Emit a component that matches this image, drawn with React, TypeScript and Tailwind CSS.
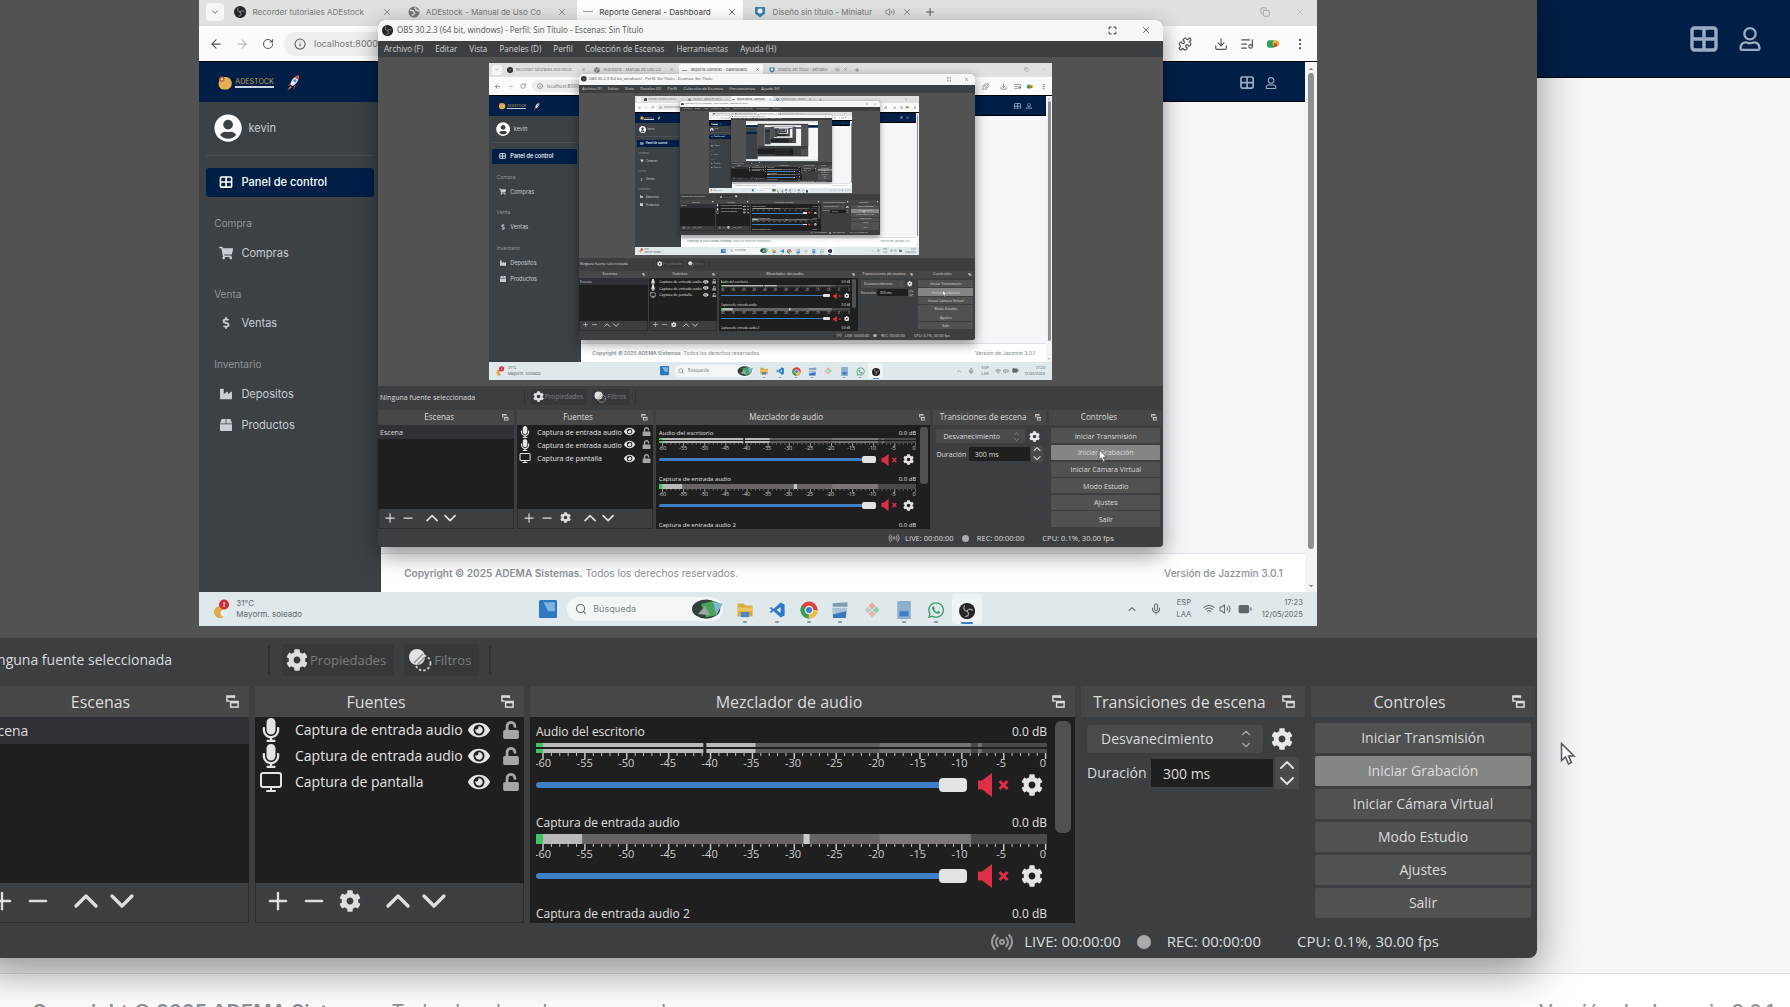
import React from "react";
import {
  ArrowLeft,
  ArrowRight,
  ChevronDown,
  ChevronUp,
  Download,
  Info,
  Mic,
  Minus,
  Monitor,
  MoreVertical,
  Plus,
  Puzzle,
  Radio,
  RotateCw,
  Search,
  Volume2,
  Wifi,
  X,
  Copy,
  BatteryFull,
  Maximize,
  ListMusic,
} from "lucide-react";
import {
  FaBox,
  FaCog,
  FaDollarSign,
  FaEye,
  FaIndustry,
  FaMicrophone,
  FaRegUser,
  FaShoppingCart,
  FaUnlock,
  FaUserCircle,
  FaWhatsapp,
} from "react-icons/fa";

/* Below this depth the captured screen is only a few dozen pixels wide and is drawn as shapes. */
const MAX_DEPTH = 4;

/* ---------- small drawings ---------- */

function GridIcon({ className }: { className: string }) {
  return (
    <svg viewBox="0 0 28 26" className={className} fill="none" stroke="currentColor" strokeWidth="3.4">
      <rect x="2" y="2" width="24" height="22" rx="2.5" />
      <path d="M14 2v22M2 13h24" />
    </svg>
  );
}

function PopOutIcon() {
  return (
    <svg viewBox="0 0 14 14" className="size-[13px]" fill="none" stroke="currentColor" strokeWidth="1.6">
      <path d="M4 6.5H1V1h8v2.5" />
      <path d="M1 2h8" strokeWidth="2" />
      <rect x="5" y="7" width="8" height="6" />
      <path d="M5 8h8" strokeWidth="2" />
    </svg>
  );
}

function FilterIcon() {
  return (
    <svg viewBox="0 0 24 24" className="size-6">
      <circle cx="15" cy="15" r="7.5" fill="none" stroke="#cfcfcf" strokeWidth="1.8" strokeDasharray="2.5 2" />
      <circle cx="9" cy="9" r="8" fill="#e2e2e2" />
      <path d="M6 15l9-9M9 17l8-8" stroke="#8d8d8d" strokeWidth="1.4" />
    </svg>
  );
}

function MutedSpeaker() {
  return (
    <svg viewBox="0 0 32 24" className="h-6 w-8">
      <path d="M1 7.5h4L15 0v24L5 16.5H1z" fill="#dd2f45" />
      <path d="M22.5 8l8 8m0-8l-8 8" stroke="#dd2f45" strokeWidth="3" />
    </svg>
  );
}

function ObsLogo({ className }: { className: string }) {
  return (
    <svg viewBox="0 0 24 24" className={className}>
      <circle cx="12" cy="12" r="12" fill="#26262a" />
      <g fill="none" stroke="#a8a8a8" strokeWidth="1.7" strokeLinecap="round">
        <path d="M8 4c-2 4 0 8 4 8" />
        <path d="M20 11c-3-3-7-2-8 1" />
        <path d="M10 20c4 0 6-4 2-8" />
      </g>
    </svg>
  );
}

function Rocket() {
  return (
    <svg viewBox="0 0 30 36" className="h-9 w-7">
      <path d="M27 2C18 3 11 12 9 21l5 4C21 21 28 12 27 2z" fill="#e4e8ee" />
      <path d="M27 2c-3 0-6 2-8 4l7 5c1-3 1-6 1-9z" fill="#d5463c" />
      <circle cx="19" cy="13" r="3" fill="#4b84bd" />
      <path d="M10 17l-6 7 5-2zM17 24l-1 8 5-9z" fill="#c9403a" />
      <path d="M9 24l-6 10 9-7z" fill="#f0a040" />
    </svg>
  );
}

function AdeLogo() {
  return (
    <span className="flex items-center gap-1">
      <svg viewBox="0 0 30 30" className="size-8">
        <path d="M4 10c3-8 20-10 23 2 2 10-4 16-13 15C5 27 1 20 4 10z" fill="#e2b04e" />
        <circle cx="9" cy="8" r="5" fill="#c8603c" />
        <circle cx="9" cy="8" r="2" fill="#f4ead6" />
      </svg>
      <span className="flex flex-col">
        <span className="text-sm leading-4 text-[#c99a56]">ADESTOCK</span>
        <span className="h-1 w-full bg-[#c9d2de]" />
      </span>
    </span>
  );
}

function Cursor({ className }: { className: string }) {
  return (
    <svg viewBox="0 0 16 24" className={className}>
      <path d="M1.5 1.5v17l4-3.5 3 7 3-1.5-3-6.500h5.500z" fill="#fff" stroke="#555" strokeWidth="1.5" />
    </svg>
  );
}

/* The captured desktop as plain shapes, repeated inside itself. */
function MiniScreen({ levels }: { levels: number }) {
  return (
    <>
      <rect width="2218" height="1248" fill="#f4f6f9" />
      <rect width="2218" height="57" fill="#dfe1e1" />
      <rect y="57" width="2218" height="70" fill="#fbfbfb" />
      <rect y="127" width="2218" height="79" fill="#001f47" />
      <rect y="206" width="361" height="973" fill="#3b4145" />
      <rect x="14" y="337" width="341" height="58" fill="#001f47" />
      <rect y="1179" width="2218" height="69" fill="#dfe8ea" />
      <rect x="355" y="44" width="1558" height="42" fill="#f6f6f6" />
      <rect x="355" y="86" width="1558" height="1003" fill="#3c3f41" />
      <rect x="355" y="118" width="1558" height="652" fill="#525252" />
      <rect x="355" y="849" width="270" height="166" fill="#1f1f1f" />
      <rect x="631" y="849" width="269" height="166" fill="#1f1f1f" />
      <rect x="906" y="849" width="545" height="206" fill="#1f1f1f" />
      <rect x="914" y="914" width="428" height="7" fill="#3f7fc6" />
      <rect x="914" y="1005" width="428" height="7" fill="#3f7fc6" />
      <rect x="1691" y="855" width="216" height="196" fill="#505151" />
      {levels > 0 && (
        <g transform="translate(575 130) scale(0.504)">
          <MiniScreen levels={levels - 1} />
        </g>
      )}
    </>
  );
}

/* ---------- OBS window ---------- */

function IconButton({ label, children }: { label: string; children: React.ReactNode }) {
  return (
    <button aria-label={label} className="flex size-7 items-center justify-center text-[#dedede]">
      {children}
    </button>
  );
}

function Dock({ title, className, children }: { title: string; className: string; children: React.ReactNode }) {
  return (
    <section className={`flex h-[237px] flex-col ${className}`}>
      <header className="flex h-[31px] shrink-0 items-center bg-[#474747] text-[#dcdcdc]">
        <h2 className="flex-1 pr-1 text-center text-base whitespace-nowrap">{title}</h2>
        <button aria-label={`Desacoplar ${title}`} className="mr-2.5">
          <PopOutIcon />
        </button>
      </header>
      {children}
    </section>
  );
}

function ListTools({ withGear }: { withGear?: boolean }) {
  return (
    <div className="flex h-10 shrink-0 items-center gap-2 border border-t-0 border-[#2c2e30] px-2 pb-1">
      <IconButton label="Añadir">
        <Plus className="size-7" strokeWidth={2} />
      </IconButton>
      <IconButton label="Quitar">
        <Minus className="size-7" strokeWidth={2} />
      </IconButton>
      {withGear && (
        <IconButton label="Propiedades de la fuente">
          <FaCog className="size-[22px]" />
        </IconButton>
      )}
      <span className="w-1" />
      <IconButton label="Subir">
        <ChevronUp className="size-10 shrink-0" strokeWidth={2} />
      </IconButton>
      <IconButton label="Bajar">
        <ChevronDown className="size-10 shrink-0" strokeWidth={2} />
      </IconButton>
    </div>
  );
}

function SourceRow({ name, screen }: { name: string; screen?: boolean }) {
  return (
    <li className="flex h-[26px] items-center pr-1 pl-1 text-[#e4e4e4]">
      <span className="flex w-6 shrink-0 justify-center">
        {screen ? <Monitor className="size-6" strokeWidth={2} /> : <FaMicrophone className="size-6" />}
      </span>
      <span className="ml-3 flex-1 text-sm whitespace-nowrap">{name}</span>
      <button aria-label={`Mostrar ${name}`}>
        <FaEye className="size-[22px]" />
      </button>
      <button aria-label={`Bloquear ${name}`} className="ml-3 text-[#a6a6a6]">
        <FaUnlock className="size-[18px]" />
      </button>
    </li>
  );
}

const MARKS = [-60, -55, -50, -45, -40, -35, -30, -25, -20, -15, -10, -5, 0];

function MeterBar({ double: isDouble }: { double?: boolean }) {
  return isDouble ? (
    <svg viewBox="0 0 510 10" preserveAspectRatio="none" className="block h-2.5 w-full">
      <rect width="510" height="10" fill="#4a4a4c" />
      <rect width="434" height="10" fill="#777375" />
      <rect width="343" height="10" fill="#615d5f" />
      <rect width="219" height="10" fill="#b9b9b9" />
      <rect x="441" width="4" height="10" fill="#737373" />
      <rect x="167" width="3" height="10" fill="#1f1f1f" />
      <rect width="7" height="10" fill="#42c463" />
      <rect y="4" width="510" height="2" fill="#1f1f1f" />
    </svg>
  ) : (
    <svg viewBox="0 0 510 10" preserveAspectRatio="none" className="block h-2.5 w-full">
      <rect width="510" height="10" fill="#4a4a4c" />
      <rect width="434" height="10" fill="#7b7779" />
      <rect width="343" height="10" fill="#686466" />
      <rect width="46" height="10" fill="#b9b9b9" />
      <rect x="267" width="6" height="10" fill="#c9c9c9" />
      <rect width="7" height="10" fill="#42c463" />
    </svg>
  );
}

function MeterScale() {
  return (
    <>
      <svg viewBox="0 0 510 6" preserveAspectRatio="none" className="block h-1.5 w-full" stroke="#c4c4c4">
        {Array.from({ length: 61 }, (_, i) => (
          <path key={i} d={`M${7 + i * 8.36} 0v${i % 5 ? 3 : 6}`} strokeWidth={i % 5 ? 1 : 1.5} />
        ))}
      </svg>
      <div className="flex h-3.5 justify-between pr-1 pl-[7px] text-[11px] leading-2 text-[#d0d0d0]">
        {MARKS.map((m) => (
          <span key={m} className="flex w-0 justify-center">
            {m}
          </span>
        ))}
      </div>
    </>
  );
}

function Channel({ name, stereo, labelOnly }: { name: string; stereo?: boolean; labelOnly?: boolean }) {
  return (
    <div className="h-[91px] shrink-0">
      <div className="flex h-[22px] items-center justify-between text-xs text-[#e0e0e0]">
        <span>{name}</span>
        <span>0.0 dB</span>
      </div>
      {!labelOnly && (
        <>
          <MeterBar double={stereo} />
          <MeterScale />
          <div className="flex h-6 items-center">
            <input
              type="range"
              aria-label={`Volumen ${name}`}
              defaultValue={100}
              className="h-1.5 min-w-0 flex-1 appearance-none rounded-full bg-[#3f7fc6] [&::-webkit-slider-thumb]:h-3.5 [&::-webkit-slider-thumb]:w-7 [&::-webkit-slider-thumb]:appearance-none [&::-webkit-slider-thumb]:rounded-sm [&::-webkit-slider-thumb]:bg-[#e2e3e4]"
            />
            <button aria-label={`Silenciar ${name}`} className="ml-2.5">
              <MutedSpeaker />
            </button>
            <button aria-label={`Opciones de ${name}`} className="mr-1 ml-3 text-[#e4e4e4]">
              <FaCog className="size-[22px]" />
            </button>
          </div>
        </>
      )}
    </div>
  );
}

const CONTROLS = [
  "Iniciar Transmisión",
  "Iniciar Grabación",
  "Iniciar Cámara Virtual",
  "Modo Estudio",
  "Ajustes",
  "Salir",
];

const MENUS = [
  "Archivo (F)",
  "Editar",
  "Vista",
  "Paneles (D)",
  "Perfil",
  "Colección de Escenas",
  "Herramientas",
  "Ayuda (H)",
];

function ObsWindow({ depth, chrome, className }: { depth: number; chrome?: boolean; className: string }) {
  return (
    <div
      className={`absolute flex flex-col overflow-hidden rounded-b-lg bg-[#3c3f41] font-['Open_Sans',sans-serif] text-[#dcdcdc] shadow-[0_14px_44px_rgba(0,0,0,0.42)] ${className}`}
    >
      {chrome && (
        <>
          <div className="flex h-[42px] shrink-0 items-center bg-[#f6f6f6] pr-6 pl-2 text-[#555]">
            <ObsLogo className="size-[22px]" />
            <span className="ml-2 text-base">
              OBS 30.2.3 (64 bit, windows) - Perfil: Sin Título - Escenas: Sin Título
            </span>
            <button aria-label="Maximizar" className="ml-auto">
              <Maximize className="size-[18px]" strokeWidth={3} />
            </button>
            <button aria-label="Cerrar" className="ml-12">
              <X className="size-5" />
            </button>
          </div>
          <nav className="flex h-8 shrink-0 items-center gap-6 px-3 text-base text-[#d4d4d4]">
            {MENUS.map((m) => (
              <button key={m} className="whitespace-nowrap">
                {m}
              </button>
            ))}
          </nav>
        </>
      )}

      <div className="flex min-h-[652px] flex-1 items-center justify-center overflow-hidden bg-[#525252]">
        <div className="shrink-0 [zoom:0.504]">
          {depth < MAX_DEPTH ? (
            <Screen depth={depth + 1} />
          ) : (
            <svg viewBox="0 0 2218 1248" className="block h-[1248px] w-[2218px]">
              <MiniScreen levels={4} />
            </svg>
          )}
        </div>
      </div>

      <div className="flex h-12 shrink-0 items-center pb-1 text-sm">
        <span className="w-[289px] pl-1">Ninguna fuente seleccionada</span>
        <span className="h-7 w-0.5 bg-[#2f3133]" />
        <button className="ml-3 flex h-8 items-center gap-0.5 bg-[#36393b] pr-2 pl-1 text-[13px] text-[#7a7d7f]">
          <FaCog className="size-[22px] text-[#dedede]" />
          Propiedades
        </button>
        <button className="ml-2.5 flex h-8 items-center gap-0.5 bg-[#36393b] pr-2 pl-1 text-[13px] text-[#7a7d7f]">
          <FilterIcon />
          Filtros
        </button>
        <span className="ml-2.5 h-7 w-0.5 bg-[#2f3133]" />
      </div>

      <div className="flex shrink-0 gap-1.5 pr-0.5">
        <Dock title="Escenas" className="w-[270px]">
          <div className="flex-1 bg-[#1f1f1f]">
            <div className="flex h-[27px] items-center bg-[#2f3137] pl-1 text-sm">Escena</div>
          </div>
          <ListTools />
        </Dock>
        <Dock title="Fuentes" className="w-[269px]">
          <ul className="flex-1 bg-[#1f1f1f]">
            <SourceRow name="Captura de entrada audio" />
            <SourceRow name="Captura de entrada audio" />
            <SourceRow name="Captura de pantalla" screen />
          </ul>
          <ListTools withGear />
        </Dock>
        <Dock title="Mezclador de audio" className="min-w-0 flex-1">
          <div className="flex flex-1 overflow-hidden bg-[#1f1f1f] pr-1 pl-1.5">
            <div className="flex h-[206px] min-w-0 flex-1 flex-col overflow-hidden pt-1">
              <Channel name="Audio del escritorio" stereo />
              <Channel name="Captura de entrada audio" />
              <Channel name="Captura de entrada audio 2" labelOnly />
            </div>
            <div className="mt-1 ml-2 h-[112px] w-4 rounded-md bg-[#505050]" />
          </div>
        </Dock>
        <Dock title="Transiciones de escena" className="w-56">
          <div className="flex flex-col gap-1 px-1.5 pt-2 text-sm">
            <div className="flex items-center">
              <div className="relative w-44">
                <select
                  aria-label="Transición"
                  className="h-7 w-full appearance-none rounded-sm bg-[#484a4b] pl-3.5 text-[#dcdcdc]"
                >
                  <option>Desvanecimiento</option>
                </select>
                <span className="pointer-events-none absolute inset-y-0 right-2.5 flex flex-col justify-center text-[#a8a8a8]">
                  <ChevronUp className="-mb-0.5 size-3.5" />
                  <ChevronDown className="size-3.5" />
                </span>
              </div>
              <button aria-label="Opciones de transición" className="ml-2 text-[#e8e8e8]">
                <FaCog className="size-[22px]" />
              </button>
            </div>
            <div className="flex items-center">
              <label className="flex items-center gap-2">
                <span className="w-14">Duración</span>
                <input defaultValue="300 ms" className="h-7 w-[122px] bg-[#1f1f1f] px-3 text-[#dcdcdc]" />
              </label>
              <span className="ml-0.5 flex h-8 flex-col bg-[#484a4b]">
                <button aria-label="Aumentar" className="flex h-4 w-6 items-center justify-center">
                  <ChevronUp className="size-6 shrink-0" />
                </button>
                <button aria-label="Reducir" className="flex h-4 w-6 items-center justify-center">
                  <ChevronDown className="size-6 shrink-0" />
                </button>
              </span>
            </div>
          </div>
        </Dock>
        <Dock title="Controles" className="w-56">
          <div className="flex flex-1 flex-col gap-[3px] px-1 pt-1.5">
            {CONTROLS.map((c) => (
              <button
                key={c}
                className={`h-[30px] rounded-xs text-sm ${c === "Iniciar Grabación" ? "bg-[#848585]" : "bg-[#505151]"}`}
              >
                {c}
              </button>
            ))}
          </div>
        </Dock>
      </div>

      <div className="flex h-[35px] shrink-0 items-center justify-end pt-0.5 pr-[98px] text-[15px]">
        <Radio className="mr-2.5 size-6 text-[#9b9b9b]" />
        <span>LIVE: 00:00:00</span>
        <span className="mx-4 size-3.5 rounded-full bg-[#a9abab]" />
        <span>REC: 00:00:00</span>
        <span className="ml-9">CPU: 0.1%, 30.00 fps</span>
      </div>
    </div>
  );
}

/* ---------- dashboard page ---------- */

function NavBar({ className }: { className: string }) {
  return (
    <header className={`flex shrink-0 items-center justify-end gap-5 border-b border-black bg-[#001f47] text-[#9dabc2] ${className}`}>
      <button aria-label="Accesos">
        <GridIcon className="h-[26px] w-7" />
      </button>
      <button aria-label="Cuenta">
        <FaRegUser className="size-6" />
      </button>
    </header>
  );
}

function PageFooter({ className }: { className: string }) {
  return (
    <footer
      className={`flex h-[76px] shrink-0 items-center justify-between border-t border-[#dee2e6] bg-white text-xl text-[#8d9296] ${className}`}
    >
      <span className="whitespace-nowrap">
        <strong className="font-semibold">Copyright © 2025 ADEMA Sistemas.</strong> Todos los derechos reservados.
      </span>
      <span className="font-medium whitespace-nowrap">Versión de Jazzmin 3.0.1</span>
    </footer>
  );
}

function SideHeading({ children }: { children: React.ReactNode }) {
  return <h3 className="pt-9 pb-4 pl-4 text-xl leading-[26px] text-[#8f9499]">{children}</h3>;
}

function SideItem({ icon, label, active }: { icon: React.ReactNode; label: string; active?: boolean }) {
  return (
    <a
      href="#"
      className={`mb-1 flex h-[58px] items-center gap-4 rounded-md pl-[26px] text-[22px] ${
        active ? "bg-[#001f47] font-medium text-white" : "text-[#c8ced3]"
      }`}
    >
      <span className="flex w-7 justify-center">{icon}</span>
      {label}
    </a>
  );
}

function Sidebar() {
  return (
    <aside className="flex w-[361px] shrink-0 flex-col bg-[#3b4145]">
      <div className="flex h-[79px] shrink-0 items-center gap-6 bg-[#001f47] pt-1 pl-9">
        <AdeLogo />
        <Rocket />
      </div>
      <div className="mx-3.5 flex h-[106px] shrink-0 items-center gap-3 border-b border-[#4b5156] pl-4 text-[22px] text-[#c8ced3]">
        <FaUserCircle className="size-14 text-white" />
        kevin
      </div>
      <nav className="px-3.5 pt-6">
        <SideItem active icon={<GridIcon className="h-6 w-7" />} label="Panel de control" />
        <SideHeading>Compra</SideHeading>
        <SideItem icon={<FaShoppingCart className="size-7" />} label="Compras" />
        <SideHeading>Venta</SideHeading>
        <SideItem icon={<FaDollarSign className="size-6" />} label="Ventas" />
        <SideHeading>Inventario</SideHeading>
        <SideItem icon={<FaIndustry className="size-6" />} label="Depositos" />
        <SideItem icon={<FaBox className="size-6" />} label="Productos" />
      </nav>
    </aside>
  );
}

/* ---------- browser and desktop ---------- */

function Tab({
  icon,
  title,
  active,
  audible,
  className,
}: {
  icon: React.ReactNode;
  title: string;
  active?: boolean;
  audible?: boolean;
  className: string;
}) {
  return (
    <div
      className={`flex h-[50px] items-center gap-3 rounded-t-lg px-3 text-base ${active ? "bg-white text-[#444]" : "text-[#777]"} ${className}`}
    >
      {icon}
      <span className="flex-1 overflow-hidden whitespace-nowrap">{title}</span>
      {audible && <Volume2 className="size-5" />}
      <button aria-label={`Cerrar ${title}`}>
        <X className="size-5" />
      </button>
    </div>
  );
}

function BrowserChrome() {
  return (
    <>
      <div className="flex h-[57px] shrink-0 items-center bg-[#dfe1e1] pl-3.5 text-[#555]">
        <button aria-label="Buscar pestañas" className="flex size-9 items-center justify-center rounded-lg bg-[#f6f6f6]">
          <ChevronDown className="size-5" />
        </button>
        <Tab className="ml-2 w-[336px]" title="Recorder tutoriales ADEstock" icon={<ObsLogo className="size-6" />} />
        <Tab
          className="ml-2 w-[340px]"
          title="ADEstock - Manual de Uso Co"
          icon={
            <svg viewBox="0 0 24 24" className="size-6">
              <circle cx="12" cy="12" r="11" fill="#777" />
              <path d="M4 8l7 2 2 5-5 4M14 3l2 5 6 2" stroke="#ddd" strokeWidth="3" fill="none" />
            </svg>
          }
        />
        <Tab
          active
          className="ml-2 w-[330px]"
          title="Reporte General - Dashboard"
          icon={<span className="h-0.5 w-5 bg-[#999]" />}
        />
        <Tab
          audible
          className="ml-2.5 w-[336px]"
          title="Diseño sin título - Miniatur"
          icon={
            <svg viewBox="0 0 24 24" className="size-6">
              <path d="M2 2h20v13l-10 8-10-8z" fill="#3f7fa8" />
              <circle cx="12" cy="10" r="5" fill="#eef4f6" />
            </svg>
          }
        />
        <button aria-label="Nueva pestaña" className="ml-3">
          <Plus className="size-6" />
        </button>
        <button aria-label="Restaurar" className="ml-auto text-[#999]">
          <Copy className="size-5" />
        </button>
        <button aria-label="Cerrar navegador" className="mr-6 ml-12 text-[#bbb]">
          <X className="size-5" />
        </button>
      </div>
      <div className="flex h-[70px] shrink-0 items-center bg-[#fbfbfb] pr-5 pl-5 text-[#555]">
        <button aria-label="Atrás">
          <ArrowLeft className="size-7" />
        </button>
        <button aria-label="Adelante" className="ml-6 text-[#bbb]">
          <ArrowRight className="size-7" />
        </button>
        <button aria-label="Recargar" className="ml-6">
          <RotateCw className="size-6" />
        </button>
        <div className="ml-5 flex h-12 w-[1660px] items-center gap-4 rounded-full bg-[#eeeeee] pl-5">
          <Info className="size-6" />
          <input aria-label="Dirección" defaultValue="localhost:8000" className="w-80 bg-transparent text-lg text-[#777]" />
        </div>
        <div className="ml-auto flex items-center gap-6">
          <Puzzle className="mr-5 size-7" />
          <Download className="size-7" />
          <ListMusic className="size-7" />
          <svg viewBox="0 0 30 20" className="h-5 w-7">
            <rect y="2" width="18" height="16" rx="5" fill="#2f9e57" />
            <circle cx="19" cy="9" r="7" fill="#e2b33c" />
            <circle cx="18" cy="12" r="4" fill="#d24a3a" />
          </svg>
          <MoreVertical className="size-7" />
        </div>
      </div>
    </>
  );
}

function AppSlot({ children, dot }: { children: React.ReactNode; dot?: boolean }) {
  return (
    <span className="flex w-[63px] flex-col items-center pt-3">
      <span className="flex h-9 items-center">{children}</span>
      <span className={`mt-1 h-1 w-2 rounded-full ${dot ? "bg-[#8b9698]" : "bg-transparent"}`} />
    </span>
  );
}

function Taskbar() {
  return (
    <div className="flex h-[69px] shrink-0 items-center bg-[#dfe8ea] text-[#5c676b]">
      <div className="flex w-[674px] items-center gap-2.5 pl-7">
        <svg viewBox="0 0 36 40" className="h-10 w-9">
          <circle cx="14" cy="26" r="12" fill="#e3a94a" />
          <circle cx="22" cy="28" r="7" fill="#e8eef2" />
          <circle cx="22" cy="11" r="10" fill="#cf2f3d" />
          <path d="M22 6v10" stroke="#fff" strokeWidth="2" />
        </svg>
        <span className="flex flex-col text-base leading-[22px]">
          <span>31°C</span>
          <span>Mayorm. soleado</span>
        </span>
      </div>
      <svg viewBox="0 0 32 32" className="size-9">
        <rect width="32" height="32" rx="3" fill="#2f77bf" />
        <path d="M8 4h20v16H16z" fill="#7fb4e2" />
      </svg>
      <label className="ml-5 flex h-12 w-[310px] items-center gap-3 rounded-full bg-[#f2f6f7] pl-4">
        <Search className="size-6" />
        <input
          aria-label="Buscar"
          placeholder="Búsqueda"
          className="min-w-0 flex-1 bg-transparent text-lg placeholder:text-[#7b8588]"
        />
        <svg viewBox="0 0 64 40" className="h-10 w-16">
          <ellipse cx="30" cy="20" rx="28" ry="19" fill="#33413c" />
          <path d="M20 10l24-6 18 6-12 22-20 4z" fill="#47a45c" />
          <path d="M44 6l18 4-12 22z" fill="#7db4d8" />
          <path d="M14 30l14-16 10 18z" fill="#9aa6a2" />
        </svg>
      </label>
      <div className="ml-3 flex items-center">
        <AppSlot dot>
          <svg viewBox="0 0 32 32" className="size-8">
            <path d="M1 3h12l3 4h15v22H1z" fill="#dba945" />
            <rect x="8" y="20" width="16" height="10" fill="#4a86c5" />
            <path d="M1 11h30v7H1z" fill="#ecc565" />
          </svg>
        </AppSlot>
        <AppSlot dot>
          <svg viewBox="0 0 32 32" className="size-8">
            <path d="M23 1l8 4v22l-8 4L9 18l-5 4-3-2 5-4-5-4 3-2 5 4zM23 10l-8 6 8 6z" fill="#2b7cc4" fillRule="evenodd" />
          </svg>
        </AppSlot>
        <AppSlot dot>
          <svg viewBox="0 0 32 32" className="size-9">
            <circle cx="16" cy="16" r="15" fill="#d9453b" />
            <path d="M16 16L3 8.5A15 15 0 0 0 16 31z" fill="#35a058" />
            <path d="M16 16h14.9A15 15 0 0 1 15 31z" fill="#ecbd3e" />
            <circle cx="16" cy="16" r="7.5" fill="#fff" />
            <circle cx="16" cy="16" r="5.5" fill="#3f7fd0" />
          </svg>
        </AppSlot>
        <AppSlot dot>
          <svg viewBox="0 0 32 32" className="size-9">
            <path d="M3 4l26-2v8H3z" fill="#7f9bb5" />
            <path d="M2 12h27l-3 18H4z" fill="#a9c3da" />
            <path d="M3 24l24-6-1 12H4z" fill="#3b74ba" />
          </svg>
        </AppSlot>
        <AppSlot>
          <svg viewBox="0 0 32 32" className="size-8">
            <path d="M16 1l7 7-7 7-7-7z" fill="#e8a99a" />
            <path d="M8 9l7 7-7 7-7-7z" fill="#c5cbd0" />
            <path d="M24 9l7 7-7 7-7-7z" fill="#93cfa6" />
            <path d="M16 17l7 7-7 7-7-7z" fill="#e1b5ac" />
          </svg>
        </AppSlot>
        <AppSlot dot>
          <svg viewBox="0 0 24 32" className="h-9 w-7">
            <rect width="24" height="32" rx="2" fill="#8eb0d0" />
            <rect x="4" y="18" width="16" height="9" fill="#3f7dc2" />
          </svg>
        </AppSlot>
        <AppSlot dot>
          <FaWhatsapp className="size-9 text-[#3a9a63]" />
        </AppSlot>
        <span className="flex h-[60px] w-[60px] flex-col items-center justify-end rounded-md bg-[#eef3f4]">
          <ObsLogo className="size-8" />
          <span className="mt-1.5 h-1 w-6 rounded-full bg-[#3f7dc2]" />
        </span>
      </div>
      <div className="ml-auto flex items-center pr-7 text-[15px] leading-[24px]">
        <ChevronUp className="size-6" />
        <Mic className="ml-6 size-6" />
        <span className="ml-7 text-center">
          ESP
          <br />
          LAA
        </span>
        <Wifi className="ml-6 size-6" />
        <Volume2 className="ml-2 size-6" />
        <BatteryFull className="ml-3 size-7" fill="currentColor" />
        <span className="ml-5 text-right">
          17:23
          <br />
          12/05/2025
        </span>
      </div>
    </div>
  );
}

function Screen({ depth }: { depth: number }) {
  return (
    <div className="relative flex h-[1248px] w-[2218px] flex-col overflow-hidden bg-[#f4f6f9] font-[Inter,sans-serif]">
      <BrowserChrome />
      <div className="flex flex-1 border-t-2 border-black">
        <Sidebar />
        <div className="flex flex-1 flex-col">
          <NavBar className="h-[79px] pt-1 pr-14" />
          <main className="flex-1 bg-[#f4f6f9]" />
          <PageFooter className="pr-11 pl-[46px]" />
        </div>
        <div className="flex w-6 flex-col items-center bg-[#f4f4f4] py-1 text-[#888]">
          <ChevronUp className="size-4" fill="currentColor" />
          <div className="w-3 flex-1 rounded-full bg-[#8d9093]" />
          <ChevronDown className="mt-16 size-4" fill="currentColor" />
        </div>
      </div>
      <Taskbar />
      <ObsWindow depth={depth} chrome className="top-11 right-[305px] left-[355px] rounded-t-xl" />
      <Cursor className="absolute top-[896px] left-[1784px] h-7 w-5" />
    </div>
  );
}

export default function App() {
  return (
    <div className="relative flex h-screen flex-col overflow-hidden bg-[#f4f6f9] font-[Inter,sans-serif]">
      <NavBar className="h-[78px] pr-7" />
      <main className="flex-1" />
      <PageFooter className="-mb-[42px] pr-4 pl-8" />
      <ObsWindow depth={0} className="-top-3.5 right-[253px] bottom-[49px] -left-[21px]" />
      <Cursor className="absolute top-[742px] right-[214px] h-6 w-4" />
    </div>
  );
}
